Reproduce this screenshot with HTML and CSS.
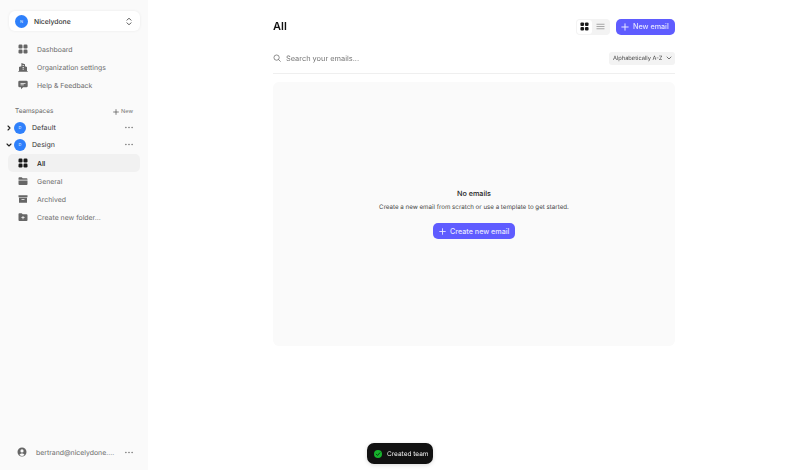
FILE: index.html
```html
<!DOCTYPE html>
<html lang="en">
<head>
<meta charset="utf-8">
<title>All</title>
<link rel="stylesheet" href="styles.css">
</head>
<body>
<svg class="defs" width="0" height="0" aria-hidden="true">
  <symbol id="grid" viewBox="0 0 10 10"><rect x="0.5" y="0.5" width="4" height="4" rx="1.2"/><rect x="5.5" y="0.5" width="4" height="4" rx="1.2"/><rect x="0.5" y="5.5" width="4" height="4" rx="1.2"/><rect x="5.5" y="5.5" width="4" height="4" rx="1.2"/></symbol>
  <symbol id="dots" viewBox="0 0 9 3"><circle cx="1" cy="1.5" r="0.8"/><circle cx="4.5" cy="1.5" r="0.8"/><circle cx="8" cy="1.5" r="0.8"/></symbol>
  <symbol id="plus" viewBox="0 0 8 8"><path d="M4 .8v6.400M.8 4h6.400" fill="none" stroke="currentColor" stroke-width="1" stroke-linecap="round"/></symbol>
</svg>
<div class="app">
  <aside class="sidebar">
    <div class="org">
      <span class="avatar">N</span>
      <span class="org-name">Nicelydone</span>
      <svg class="updown" viewBox="0 0 6 9"><path d="M1 3.200 3 1.200l2 2M1 5.800l2 2 2-2" fill="none" stroke="#555" stroke-width="1" stroke-linecap="round" stroke-linejoin="round"/></svg>
    </div>
    <nav class="nav">
      <a class="row"><svg class="ico"><use href="#grid"/></svg>Dashboard</a>
      <a class="row"><svg class="ico" viewBox="0 0 10 10"><path fill-rule="evenodd" d="M.3 9.700V8.900H1V5L3.400 4.200V.9L7 2.200V4.200L9 5V8.900H9.700V9.700ZM4.500 3.200V4H6V3.200ZM4.500 5V5.800H6V5ZM4.500 6.800V7.600H6V6.800Z"/></svg>Organization settings</a>
      <a class="row"><svg class="ico" viewBox="0 0 10 10"><path fill-rule="evenodd" d="M1.600.8h6.800A1.300 1.300 0 0 1 9.700 2.100v3.800a1.300 1.300 0 0 1-1.300 1.300H5.100L3 9.200V7.200H1.600A1.300 1.300 0 0 1 .3 5.900V2.100A1.300 1.300 0 0 1 1.600.8ZM2.500 3V3.700H7.500V3ZM2.500 4.500V5.200H5.800V4.500Z"/></svg>Help &amp; Feedback</a>
    </nav>
    <div class="spaces-head">
      <span>Teamspaces</span>
      <span class="new"><svg class="plus-s"><use href="#plus"/></svg>New</span>
    </div>
    <div class="team">
      <svg class="caret" viewBox="0 0 6 6"><path d="M2 1l2 2-2 2" fill="none" stroke="#222" stroke-width="1.100" stroke-linecap="round" stroke-linejoin="round"/></svg>
      <span class="avatar small">D</span>
      <span class="team-name">Default</span>
      <svg class="dots"><use href="#dots"/></svg>
    </div>
    <div class="team">
      <svg class="caret" viewBox="0 0 6 6"><path d="M1 2l2 2 2-2" fill="none" stroke="#222" stroke-width="1.100" stroke-linecap="round" stroke-linejoin="round"/></svg>
      <span class="avatar small">D</span>
      <span class="team-name">Design</span>
      <svg class="dots"><use href="#dots"/></svg>
    </div>
    <nav class="nav sub">
      <a class="row active"><svg class="ico"><use href="#grid"/></svg>All</a>
      <a class="row"><svg class="ico" viewBox="0 0 10 10"><path d="M.5 2.200A.9.9 0 0 1 1.400 1.300H3.700L4.700 2.300H8.600A.9.9 0 0 1 9.500 3.200V3.800H.5ZM.5 4.400H9.500V8A.9.9 0 0 1 8.600 8.900H1.400A.9.9 0 0 1 .5 8Z"/></svg>General</a>
      <a class="row"><svg class="ico" viewBox="0 0 10 10"><path d="M.5 1.300H9.500V3.200H.5ZM1 3.800H9V8.800H1ZM3.500 5V5.800H6.500V5Z" fill-rule="evenodd"/></svg>Archived</a>
      <a class="row"><svg class="ico" viewBox="0 0 10 10"><path fill-rule="evenodd" d="M.5 2.200A.9.9 0 0 1 1.400 1.300H3.700L4.700 2.300H8.600A.9.9 0 0 1 9.500 3.200V8A.9.9 0 0 1 8.600 8.900H1.400A.9.9 0 0 1 .5 8ZM4.600 4V5.200H3.400V6H4.600V7.200H5.400V6H6.600V5.200H5.400V4Z"/></svg>Create new folder...</a>
    </nav>
    <div class="account">
      <svg class="ico" viewBox="0 0 10 10"><path fill-rule="evenodd" d="M5 .5a4.500 4.500 0 1 1 0 9 4.500 4.500 0 0 1 0-9ZM5 2.300a1.600 1.600 0 1 0 0 3.200 1.600 1.600 0 0 0 0-3.200ZM2.500 7.700a3.500 3.500 0 0 0 5 0C6.900 6.800 6 6.400 5 6.400s-1.900.4-2.500 1.300Z"/></svg>
      <span class="email">bertrand@nicelydone....</span>
      <svg class="dots"><use href="#dots"/></svg>
    </div>
  </aside>
  <main class="main">
    <header class="head">
      <h1>All</h1>
      <div class="toggle">
        <span class="tg on"><svg class="tg-ico"><use href="#grid"/></svg></span>
        <span class="tg"><svg class="tg-ico lines" viewBox="0 0 10 10"><path d="M1 2.500h8M1 5h8M1 7.500h8" fill="none" stroke="currentColor" stroke-width="0.800" stroke-linecap="round"/></svg></span>
      </div>
      <button class="btn"><svg class="plus"><use href="#plus"/></svg>New email</button>
    </header>
    <div class="search">
      <svg class="glass" viewBox="0 0 10 10"><circle cx="4.500" cy="4.500" r="3.300" fill="none" stroke="#666" stroke-width="0.900"/><path d="M7 7l2.200 2.200" stroke="#666" stroke-width="0.900" stroke-linecap="round"/></svg>
      <span class="placeholder">Search your emails...</span>
      <span class="sort">Alphabetically A-Z<svg class="sort-caret" viewBox="0 0 6 6"><path d="M1 2l2 2 2-2" fill="none" stroke="#555" stroke-width="0.800" stroke-linecap="round" stroke-linejoin="round"/></svg></span>
    </div>
    <section class="empty">
      <h2>No emails</h2>
      <p>Create a new email from scratch or use a template to get started.</p>
      <button class="btn big"><svg class="plus"><use href="#plus"/></svg>Create new email</button>
    </section>
  </main>
</div>
<div class="toast">
  <svg class="check" viewBox="0 0 10 10"><circle cx="5" cy="5" r="5" fill="#16b32c"/><path d="M2.800 5.200 4.400 6.800 7.300 3.500" fill="none" stroke="#0c2a10" stroke-width="1.100" stroke-linecap="round" stroke-linejoin="round"/></svg>
  Created team
</div>
</body>
</html>
```
FILE: styles.css
```css
* { box-sizing: border-box; }
html, body { margin: 0; height: 100%; }
body { font-family: Inter, "Liberation Sans", sans-serif; background: #fff; color: #1c1c1c; overflow: hidden; position: relative; text-rendering: geometricPrecision; }
.defs { position: absolute; }
.app { display: flex; height: 470px; filter: blur(.45px); }

.sidebar { width: 148px; flex: none; background: #fafafa; padding: 11px 8px 9px 8px; display: flex; flex-direction: column; }
.org { height: 20px; margin: 0 0 0 1px; background: #fff; border-radius: 6px; box-shadow: 0 0 3px rgba(0,0,0,.07); display: flex; align-items: center; padding: 0 8px 0 6px; }
.avatar { width: 13px; height: 13px; border-radius: 50%; background: #2f80fb; color: #cfe2ff; font-size: 4px; display: flex; align-items: center; justify-content: center; flex: none; font-weight: 500; }
.org-name { font-size: 6.800px; font-weight: 500; margin-left: 6px; flex: 1; color: #333; }
.updown { width: 6px; height: 9px; }

.nav { display: flex; flex-direction: column; margin-top: 9px; }
.nav.sub { margin-top: 1px; }
.row { height: 18px; display: flex; align-items: center; padding-left: 10px; font-size: 6.900px; color: #6a6a6a; border-radius: 5px; }
.row.active { background: #f1f1f1; color: #222; font-weight: 500; }
.ico { width: 10px; height: 10px; margin-right: 9px; fill: #666; flex: none; }
.row.active .ico { fill: #1a1a1a; }

.spaces-head { display: flex; justify-content: space-between; align-items: center; margin: 12px 0 0 7px; height: 10px; padding-right: 7px; font-size: 6.400px; color: #666; }
.new { display: flex; align-items: center; gap: 2px; font-size: 5.600px; color: #777; padding-top: 1px; }
.plus-s { width: 6px; height: 6px; color: #555; }

.team { height: 17px; display: flex; align-items: center; }
.spaces-head + .team { margin-top: 3px; }
.caret { width: 6px; height: 6px; margin-left: -2px; flex: none; }
.avatar.small { width: 12px; height: 12px; margin-left: 2px; }
.team-name { font-size: 7px; color: #333; font-weight: 400; margin-left: 6px; flex: 1; }
.dots { width: 8px; height: 3px; fill: #666; margin-right: 7px; flex: none; }

.account { margin-top: auto; height: 18px; display: flex; align-items: center; padding-left: 9px; }
.email { font-size: 6.900px; color: #6a6a6a; flex: 1; }

.main { width: 402px; margin-left: 125px; display: flex; flex-direction: column; }
.head { display: flex; align-items: center; height: 17px; margin-top: 18px; }
h1 { font-size: 11px; font-weight: 600; margin: -1px 0 0; flex: 1; color: #111; }
.toggle { display: flex; width: 34px; height: 16px; padding: 1px; background: #f3f3f3; border-radius: 4px; margin-right: 6px; }
.tg { flex: 1; display: flex; align-items: center; justify-content: center; border-radius: 3px; color: #888; }
.tg.on { flex: none; width: 15px; background: #fff; color: #1a1a1a; }
.tg-ico { width: 9px; height: 9px; fill: currentColor; }
.btn { border: 0; background: #5f5cff; color: #e4e4ff; border-radius: 5px; height: 16px; display: flex; align-items: center; font-family: inherit; font-size: 7.200px; font-weight: 500; padding: 0; }
.head .btn { width: 59px; padding-left: 5px; }
.plus { width: 8px; height: 8px; margin-right: 4px; color: #e8e8ff; }
.search { display: flex; align-items: center; height: 39px; margin-top: 0; padding: 8px 0 0 0; border-bottom: 1px solid #efefef; }
.glass { width: 8px; height: 8px; margin-right: 5px; flex: none; }
.placeholder { flex: 1; font-size: 7.400px; color: #777; }
.sort { height: 13px; background: #f3f3f3; border-radius: 3px; display: flex; align-items: center; padding: 0 3px 0 4px; font-size: 5.700px; color: #444; width: 66px; justify-content: space-between; }
.sort-caret { width: 6px; height: 6px; }

.empty { margin-top: 8px; height: 264px; background: #fafafa; border-radius: 6px; display: flex; flex-direction: column; align-items: center; padding-top: 106px; }
h2 { font-size: 7.200px; font-weight: 500; margin: 1px 0 0; color: #222; line-height: 10px; }
.empty p { font-size: 6.200px; margin: 4px 0 0; color: #444; line-height: 9px; }
.btn.big { margin-top: 11px; width: 82px; justify-content: flex-start; padding-left: 6px; }
.big .plus { width: 7px; height: 7px; margin-right: 4px; }

.toast { position: absolute; left: 367px; top: 443px; width: 66px; height: 21px; background: #111; color: #eee; border-radius: 7px; display: flex; align-items: center; font-size: 6.500px; padding-left: 7px; box-shadow: 0 1px 4px rgba(0,0,0,.15); filter: blur(.45px); }
.check { width: 8px; height: 8px; margin-right: 5px; }
```
